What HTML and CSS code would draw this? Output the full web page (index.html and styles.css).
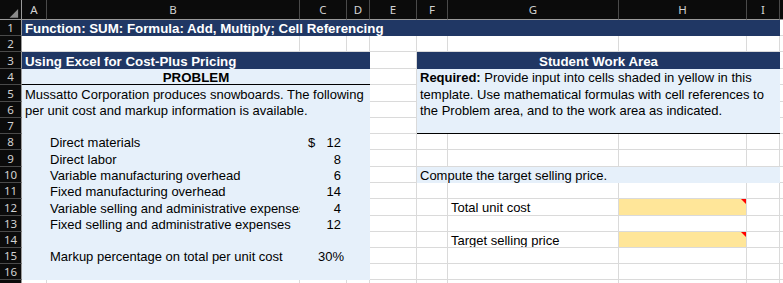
FILE: index.html
```html
<!DOCTYPE html>
<html>
<head>
<meta charset="utf-8">
<link rel="stylesheet" href="styles.css">
</head>
<body>
<div class="sheet">
  <div class="corner"><svg width="22" height="20" viewBox="0 0 22 20"><polygon points="19,9 19,18 10,18" fill="#8a8a8a"/></svg></div>
  <div class="hd">A</div><div class="hd">B</div><div class="hd">C</div><div class="hd">D</div><div class="hd">E</div><div class="hd">F</div><div class="hd">G</div><div class="hd">H</div><div class="hd">I</div><div class="hd last"></div>

  <div class="rh">1</div><div class="nv span9">Function: SUM: Formula: Add, Multiply; Cell Referencing</div><div class="c"></div>

  <div class="rh">2</div><div class="c span2"></div><div class="c"></div><div class="c"></div><div class="c"></div><div class="c"></div><div class="c"></div><div class="c"></div><div class="c"></div><div class="c"></div>

  <div class="rh">3</div><div class="nv span4">Using Excel for Cost-Plus Pricing</div><div class="c"></div><div class="nv span4 center">Student Work Area</div><div class="c"></div>

  <div class="rh">4</div><div class="lb span4 center bold under">PROBLEM</div><div class="c"></div>
  <div class="lb span4 rows4 under req"><div><b>Required:</b> Provide input into cells shaded in yellow in this<br>template. Use mathematical formulas with cell references to<br>the Problem area, and to the work area as indicated.</div></div><div class="c"></div>

  <div class="rh">5</div><div class="lb span4">Mussatto Corporation produces snowboards. The following</div><div class="c"></div><div class="c"></div>
  <div class="rh">6</div><div class="lb span4">per unit cost and markup information is available.</div><div class="c"></div><div class="c"></div>
  <div class="rh">7</div><div class="lb span4"></div><div class="c"></div><div class="c"></div>

  <div class="rh">8</div><div class="lb"></div><div class="lb lbl">Direct materials</div><div class="lb val"><span>$</span><span>12</span></div><div class="lb"></div>
  <div class="c"></div><div class="c"></div><div class="c"></div><div class="c"></div><div class="c"></div><div class="c"></div>

  <div class="rh">9</div><div class="lb"></div><div class="lb lbl">Direct labor</div><div class="lb val end"><span>8</span></div><div class="lb"></div>
  <div class="c"></div><div class="c"></div><div class="c"></div><div class="c"></div><div class="c"></div><div class="c"></div>

  <div class="rh">10</div><div class="lb"></div><div class="lb lbl">Variable manufacturing overhead</div><div class="lb val end"><span>6</span></div><div class="lb"></div>
  <div class="c"></div><div class="lb span4">Compute the target selling price.</div><div class="c"></div>

  <div class="rh">11</div><div class="lb"></div><div class="lb lbl">Fixed manufacturing overhead</div><div class="lb val end"><span>14</span></div><div class="lb"></div>
  <div class="c"></div><div class="c"></div><div class="c"></div><div class="c"></div><div class="c"></div><div class="c"></div>

  <div class="rh">12</div><div class="lb"></div><div class="lb lbl">Variable selling and administrative expenses</div><div class="lb val end"><span>4</span></div><div class="lb"></div>
  <div class="c"></div><div class="c"></div><div class="c">Total unit cost</div><div class="c yel"><span class="note"></span></div><div class="c"></div><div class="c"></div>

  <div class="rh">13</div><div class="lb"></div><div class="lb lbl">Fixed selling and administrative expenses</div><div class="lb val end"><span>12</span></div><div class="lb"></div>
  <div class="c"></div><div class="c"></div><div class="c"></div><div class="c"></div><div class="c"></div><div class="c"></div>

  <div class="rh">14</div><div class="lb span4"></div>
  <div class="c"></div><div class="c"></div><div class="c">Target selling price</div><div class="c yel"><span class="note"></span></div><div class="c"></div><div class="c"></div>

  <div class="rh">15</div><div class="lb"></div><div class="lb lbl">Markup percentage on total per unit cost</div><div class="lb val end pct"><span>30%</span></div><div class="lb"></div>
  <div class="c"></div><div class="c"></div><div class="c"></div><div class="c"></div><div class="c"></div><div class="c"></div>

  <div class="rh">16</div><div class="lb span4"></div>
  <div class="c"></div><div class="c"></div><div class="c"></div><div class="c"></div><div class="c"></div><div class="c"></div>

  <div class="rh"></div><div class="c"></div><div class="c"></div><div class="c"></div><div class="c"></div><div class="c"></div><div class="c"></div><div class="c"></div><div class="c"></div><div class="c"></div><div class="c"></div>
</div>
</body>
</html>
```

FILE: styles.css
```css
html, body {
  margin: 0;
  padding: 0;
  background: #ffffff;
  overflow: hidden;
}

.sheet {
  width: 783px;
  height: 283px;
  overflow: hidden;
  display: grid;
  grid-template-columns: 22px 25px 253px 47px 23px 47px 31px 171px 128px 33px 1fr;
  grid-template-rows: 20px 16px 16px 17px 16px 17px 16px 16px 16px 17px 16px 16px 17px 16px 16px 16px 16px 20px;
  font-family: "Liberation Sans", Arial, sans-serif;
  font-size: 13px;
  color: #000000;
}

.sheet > div {
  box-sizing: border-box;
  min-width: 0;
  white-space: nowrap;
  overflow: hidden;
  display: flex;
  align-items: center;
  padding-left: 3px;
  padding-top: 1px;
  line-height: 15px;
}

.corner {
  background: #0b0b0b;
  border-right: 1px solid #9a9a9a;
  border-bottom: 1px solid #9a9a9a;
  padding: 0 !important;
}

.hd {
  background: #0b0b0b;
  color: #d2d2d2;
  font-family: "Noto Sans", "DejaVu Sans", sans-serif;
  font-size: 11.5px;
  justify-content: center;
  padding-left: 0 !important;
  padding-top: 0 !important;
  border-right: 1px solid #4a4a4a;
  border-bottom: 1px solid #9a9a9a;
}

.hd.last {
  border-right: none;
}

.rh {
  background: #0b0b0b;
  color: #d2d2d2;
  font-family: "Noto Sans", "DejaVu Sans", sans-serif;
  font-size: 11.5px;
  justify-content: center;
  padding-left: 0 !important;
  padding-top: 0 !important;
  border-right: 1px solid #9a9a9a;
  border-bottom: 1px solid #4a4a4a;
}

.c {
  background: #ffffff;
  border-right: 1px solid #dadada;
  border-bottom: 1px solid #dadada;
}

.nv {
  background: #203764;
  color: #ffffff;
  font-weight: bold;
  font-size: 13.3px;
}

.lb {
  background: #e6f0fa;
}

.yel {
  background: #ffe699;
  position: relative;
}

.note {
  position: absolute;
  top: 0;
  right: 0;
  width: 0;
  height: 0;
  border-top: 5px solid #ff0000;
  border-left: 5px solid transparent;
}

.span2 { grid-column: span 2; }
.span4 { grid-column: span 4; }
.span9 { grid-column: span 9; }
.rows4 { grid-row: span 4; }

.center {
  justify-content: center;
  padding-left: 0 !important;
}

.bold { font-weight: bold; font-size: 13.3px; }

.under {
  border-bottom: 1px solid #000000;
}

.req {
  align-items: flex-start !important;
}

.req > div {
  line-height: 16.5px;
}

.lbl {
  padding-left: 3px;
}

.val {
  justify-content: space-between;
  padding-left: 8px !important;
  padding-right: 6px;
}

.val.end {
  justify-content: flex-end;
}

.val.pct {
  padding-right: 3px;
}
```
